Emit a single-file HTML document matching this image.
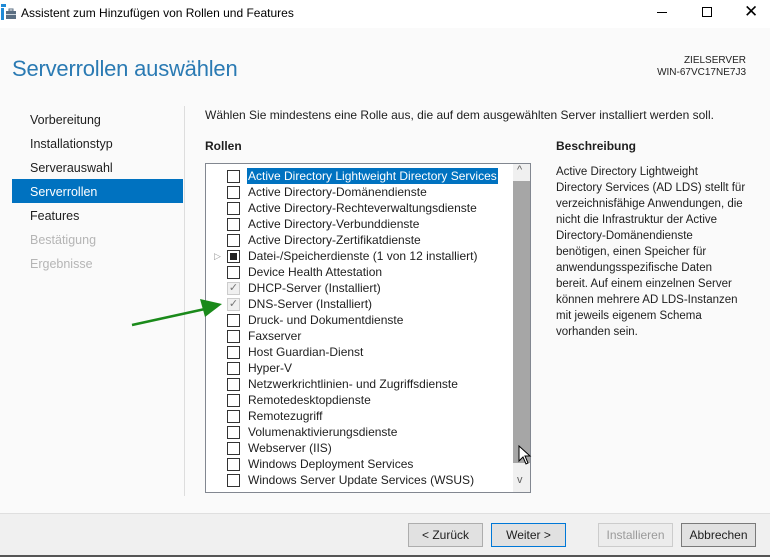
<!DOCTYPE html>
<html><head><meta charset="utf-8"><style>
*{margin:0;padding:0;box-sizing:border-box}
body{width:770px;height:557px;overflow:hidden;background:#fafafa;font-family:"Liberation Sans",sans-serif;font-size:12px;color:#1e1e1e;position:relative}
.a{position:absolute;white-space:nowrap}
.nav{left:30px;font-size:12.5px}
.row{position:absolute;left:0;height:16px;line-height:16px}
.cb{position:absolute;left:21px;top:2px;width:13px;height:13px;border:1px solid #333;background:#fff}
.lbl{position:absolute;left:42px;top:0;font-size:12px}
.btn{position:absolute;top:523px;height:24px;border:1px solid #adadad;background:#e1e1e1;text-align:center;line-height:22px;font-size:12px}
</style></head><body>
<div class="a" style="left:0;top:0;width:770px;height:28px;background:#fff"></div>
<svg class="a" style="left:1px;top:4px" width="16" height="16"><rect x="0" y="0" width="5" height="3" fill="#1f8ad6"/><rect x="0" y="4" width="3" height="12" fill="#1f8ad6"/><rect x="5" y="7" width="10" height="8" fill="#5a6e82"/><rect x="8" y="5" width="4" height="2" fill="none" stroke="#5a6e82"/><rect x="5" y="10" width="10" height="1" fill="#cfd7de"/></svg>
<div class="a" style="left:21px;top:6px;font-size:12px;color:#000">Assistent zum Hinzufügen von Rollen und Features</div>
<div class="a" style="left:657px;top:12px;width:10px;height:1px;background:#000"></div>
<div class="a" style="left:702px;top:7px;width:10px;height:10px;border:1px solid #000"></div>
<div class="a" style="left:744px;top:2px;font-size:17px;color:#000">✕</div>
<div class="a" style="left:12px;top:56px;font-size:22px;color:#2a7ab3;letter-spacing:-0.2px">Serverrollen auswählen</div>
<div class="a" style="right:24px;top:55px;font-size:10px;text-align:right;line-height:12px;color:#222">ZIELSERVER<br>WIN-67VC17NE7J3</div>
<div class="a" style="left:184px;top:106px;width:1px;height:390px;background:#ddd"></div>
<div class="a nav" style="top:113px">Vorbereitung</div>
<div class="a nav" style="top:137px">Installationstyp</div>
<div class="a nav" style="top:161px">Serverauswahl</div>
<div class="a" style="left:12px;top:179px;width:171px;height:24px;background:#0072c0"></div>
<div class="a nav" style="top:185px;color:#fff">Serverrollen</div>
<div class="a nav" style="top:209px">Features</div>
<div class="a nav" style="top:233px;color:#b5b5b5">Bestätigung</div>
<div class="a nav" style="top:257px;color:#b5b5b5">Ergebnisse</div>
<div class="a" style="left:205px;top:108px;font-size:12px">Wählen Sie mindestens eine Rolle aus, die auf dem ausgewählten Server installiert werden soll.</div>
<div class="a" style="left:205px;top:139px;font-weight:bold;font-size:12px">Rollen</div>
<div class="a" style="left:556px;top:139px;font-weight:bold;font-size:12px">Beschreibung</div>
<div class="a" style="left:556px;top:164px;font-size:11.5px;line-height:16px">Active Directory Lightweight<br>Directory Services (AD LDS) stellt für<br>verzeichnisfähige Anwendungen, die<br>nicht die Infrastruktur der Active<br>Directory-Domänendienste<br>benötigen, einen Speicher für<br>anwendungsspezifische Daten<br>bereit. Auf einem einzelnen Server<br>können mehrere AD LDS-Instanzen<br>mit jeweils eigenem Schema<br>vorhanden sein.</div>
<div class="a" style="left:205px;top:163px;width:326px;height:330px;border:1px solid #828790;background:#fff;overflow:hidden">
<div class="a" style="left:307px;top:0;width:17px;height:328px;background:#f0f0f0"></div>
<div class="a" style="left:307px;top:17px;width:17px;height:282px;background:#a6a6a6"></div>
<div class="a" style="left:311px;top:0px;font-size:11px;color:#606060">^</div>
<div class="a" style="left:311px;top:310px;font-size:11px;color:#606060">v</div>
<div style="position:absolute;left:0;top:4px;width:306px">
<div class="row" style="top:0"><div class="cb"></div><div class="lbl" style="background:#0072c0;color:#fff;padding:0 1px;left:41px">Active Directory Lightweight Directory Services</div></div>
<div class="row" style="top:16px"><div class="cb"></div><div class="lbl">Active Directory-Domänendienste</div></div>
<div class="row" style="top:32px"><div class="cb"></div><div class="lbl">Active Directory-Rechteverwaltungsdienste</div></div>
<div class="row" style="top:48px"><div class="cb"></div><div class="lbl">Active Directory-Verbunddienste</div></div>
<div class="row" style="top:64px"><div class="cb"></div><div class="lbl">Active Directory-Zertifikatdienste</div></div>
<div class="row" style="top:80px"><div class="a" style="left:8px;top:0;color:#999;font-size:9px">▷</div><div class="cb"><div style="margin:2px;width:7px;height:7px;background:#222"></div></div><div class="lbl">Datei-/Speicherdienste (1 von 12 installiert)</div></div>
<div class="row" style="top:96px"><div class="cb"></div><div class="lbl">Device Health Attestation</div></div>
<div class="row" style="top:112px"><div class="cb" style="border-color:#ccc;background:#f0f0f0;color:#777;font-size:11px;line-height:11px;text-align:center">✓</div><div class="lbl">DHCP-Server (Installiert)</div></div>
<div class="row" style="top:128px"><div class="cb" style="border-color:#ccc;background:#f0f0f0;color:#777;font-size:11px;line-height:11px;text-align:center">✓</div><div class="lbl">DNS-Server (Installiert)</div></div>
<div class="row" style="top:144px"><div class="cb"></div><div class="lbl">Druck- und Dokumentdienste</div></div>
<div class="row" style="top:160px"><div class="cb"></div><div class="lbl">Faxserver</div></div>
<div class="row" style="top:176px"><div class="cb"></div><div class="lbl">Host Guardian-Dienst</div></div>
<div class="row" style="top:192px"><div class="cb"></div><div class="lbl">Hyper-V</div></div>
<div class="row" style="top:208px"><div class="cb"></div><div class="lbl">Netzwerkrichtlinien- und Zugriffsdienste</div></div>
<div class="row" style="top:224px"><div class="cb"></div><div class="lbl">Remotedesktopdienste</div></div>
<div class="row" style="top:240px"><div class="cb"></div><div class="lbl">Remotezugriff</div></div>
<div class="row" style="top:256px"><div class="cb"></div><div class="lbl">Volumenaktivierungsdienste</div></div>
<div class="row" style="top:272px"><div class="cb"></div><div class="lbl">Webserver (IIS)</div></div>
<div class="row" style="top:288px"><div class="cb"></div><div class="lbl">Windows Deployment Services</div></div>
<div class="row" style="top:304px"><div class="cb"></div><div class="lbl">Windows Server Update Services (WSUS)</div></div>
</div></div>
<svg class="a" style="left:130px;top:295px" width="95" height="35"><line x1="2" y1="30" x2="75" y2="14" stroke="#1a8a1a" stroke-width="2.5"/><polygon points="92,9 70,4 75,22" fill="#1a8a1a"/></svg>
<svg class="a" style="left:518px;top:445px" width="14" height="22"><path d="M1 1 L1 16 L5 12 L8 19 L10 18 L7 11 L12 11 Z" fill="#fff" stroke="#000"/></svg>
<div class="a" style="left:0;top:513px;width:770px;height:44px;background:#f0f0f0;border-top:1px solid #dfdfdf"></div>
<div class="a" style="left:0;top:555px;width:770px;height:2px;background:#555"></div>
<div class="btn" style="left:408px;width:75px">&lt; Zurück</div>
<div class="btn" style="left:491px;width:75px;border-color:#0078d7">Weiter &gt;</div>
<div class="btn" style="left:598px;width:75px;background:#ececec;border-color:#ccc;color:#9a9a9a">Installieren</div>
<div class="btn" style="left:681px;width:75px;border-color:#7a7a7a">Abbrechen</div>
</body></html>
